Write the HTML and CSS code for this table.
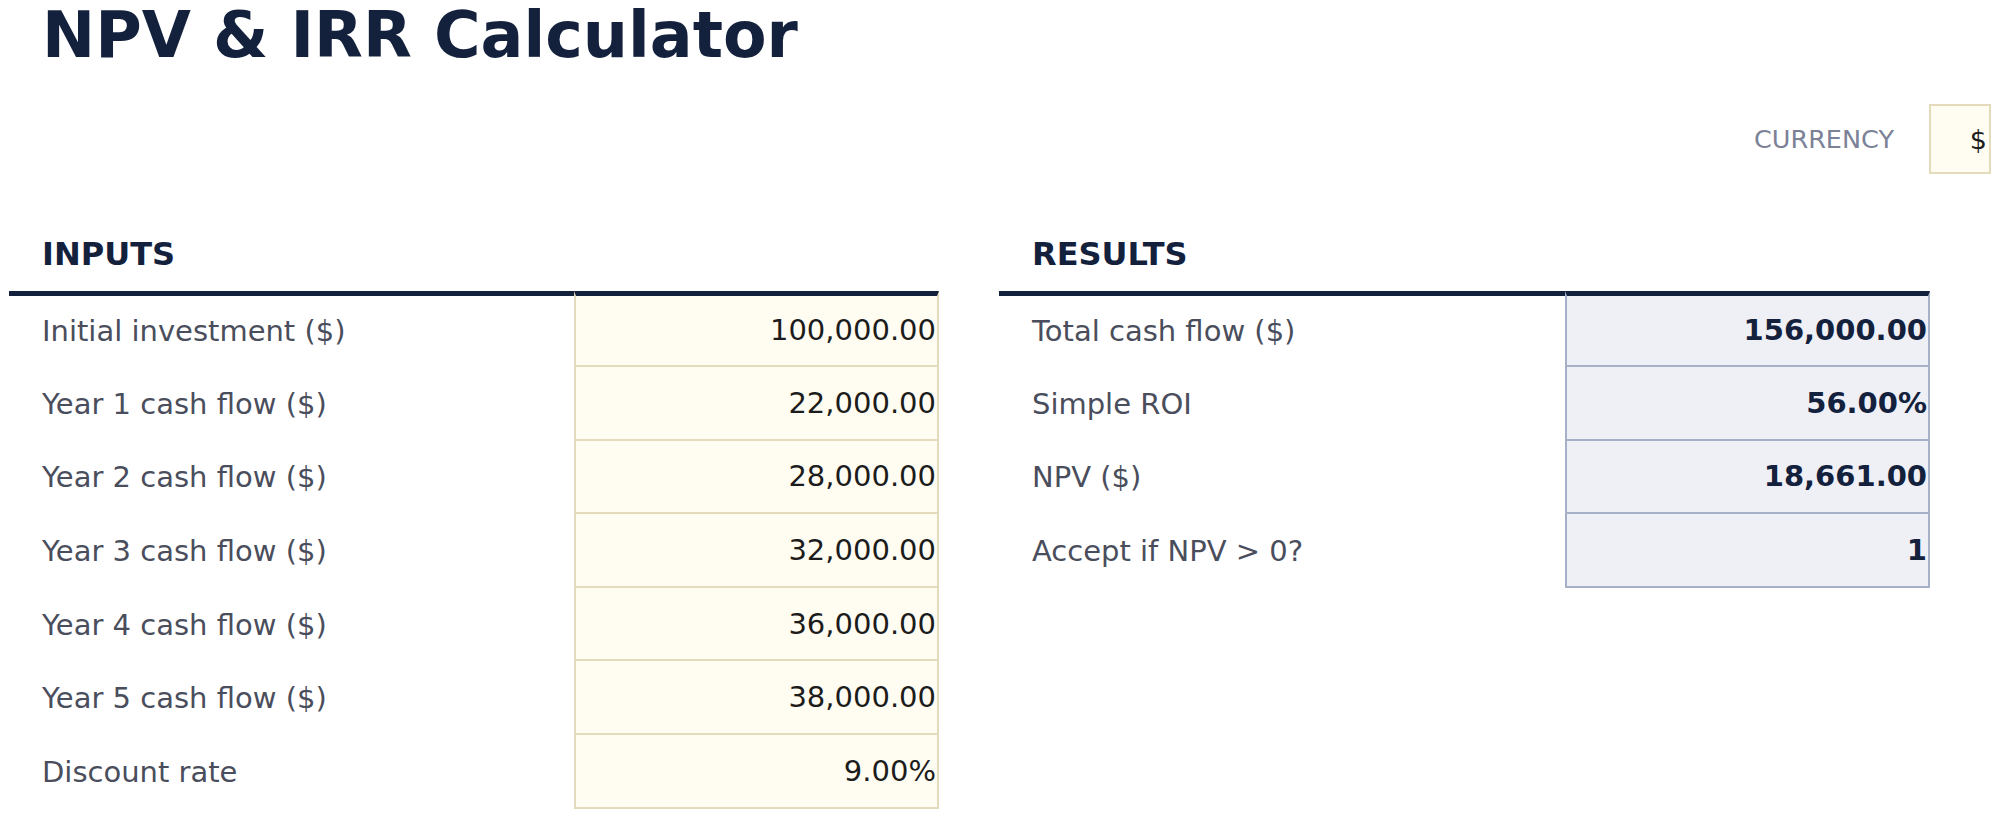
FILE: index.html
```html
<!DOCTYPE html>
<html lang="en">
<head>
<meta charset="utf-8">
<title>NPV &amp; IRR Calculator</title>
<link rel="stylesheet" href="styles.css">
</head>
<body>
<div class="page">
  <h1 class="title">NPV &amp; IRR Calculator</h1>
  <div class="currency-row">
    <span class="currency-label">CURRENCY</span>
    <div class="currency-box">$</div>
  </div>
  <div class="sections">
    <section class="panel inputs">
      <h2 class="panel-title">INPUTS</h2>
      <div class="sheet">
        <div class="label first">Initial investment ($)</div><div class="value in first">100,000.00</div>
        <div class="label">Year 1 cash flow ($)</div><div class="value in">22,000.00</div>
        <div class="label">Year 2 cash flow ($)</div><div class="value in">28,000.00</div>
        <div class="label">Year 3 cash flow ($)</div><div class="value in">32,000.00</div>
        <div class="label">Year 4 cash flow ($)</div><div class="value in">36,000.00</div>
        <div class="label">Year 5 cash flow ($)</div><div class="value in">38,000.00</div>
        <div class="label">Discount rate</div><div class="value in">9.00%</div>
      </div>
    </section>
    <section class="panel results">
      <h2 class="panel-title">RESULTS</h2>
      <div class="sheet">
        <div class="label first">Total cash flow ($)</div><div class="value out first">156,000.00</div>
        <div class="label">Simple ROI</div><div class="value out">56.00%</div>
        <div class="label">NPV ($)</div><div class="value out">18,661.00</div>
        <div class="label">Accept if NPV &gt; 0?</div><div class="value out">1</div>
      </div>
    </section>
  </div>
</div>
</body>
</html>
```

FILE: styles.css
```css
body {
  margin: 0;
  background: #ffffff;
  font-family: "DejaVu Sans", "Noto Sans", sans-serif;
}

.page {
  padding: 3px 9px 0 9px;
}

.title {
  margin: 0;
  padding-left: 33px;
  font-size: 63.5px;
  line-height: 64px;
  font-weight: 700;
  color: #14213d;
}

.currency-row {
  display: flex;
  justify-content: flex-end;
  align-items: center;
  gap: 35px;
  margin-top: 37px;
}

.currency-label {
  font-size: 25.5px;
  color: #7b8196;
}

.currency-box {
  box-sizing: border-box;
  width: 62px;
  height: 70px;
  border: 2px solid #e4dbbd;
  background: #fffcf2;
  display: flex;
  align-items: center;
  justify-content: flex-end;
  padding-right: 2px;
  font-size: 27px;
  color: #1c1c1c;
}

.sections {
  display: grid;
  grid-template-columns: 930px 931px;
  column-gap: 60px;
  margin-top: 63.6px;
}

.panel-title {
  margin: 0;
  padding: 0 0 21.4px 33px;
  font-size: 32px;
  line-height: 32px;
  font-weight: 700;
  color: #14213d;
}

.sheet {
  display: grid;
  grid-template-columns: 565px 365px;
}

.results .sheet {
  grid-template-columns: 566px 365px;
}

.label,
.value {
  box-sizing: border-box;
  height: 73.6px;
  display: flex;
  align-items: center;
  font-size: 29px;
  white-space: nowrap;
}

.label {
  padding-left: 33px;
  color: #4a4e5c;
}

.value {
  justify-content: flex-end;
  padding-right: 1px;
}

.value.in {
  background: #fffcf2;
  border-left: 2px solid #e4dbbd;
  border-right: 2px solid #e4dbbd;
  border-bottom: 2px solid #e4dbbd;
  color: #1c1c1c;
}

.value.out {
  background: #eef0f6;
  border-left: 2px solid #a6b0c7;
  border-right: 2px solid #a6b0c7;
  border-bottom: 2px solid #a6b0c7;
  color: #14213d;
  font-weight: 700;
}

.first {
  height: 76px;
  border-top: 5px solid #14213d;
}

.value.first {
  border-top: 5px solid #14213d;
}
```
